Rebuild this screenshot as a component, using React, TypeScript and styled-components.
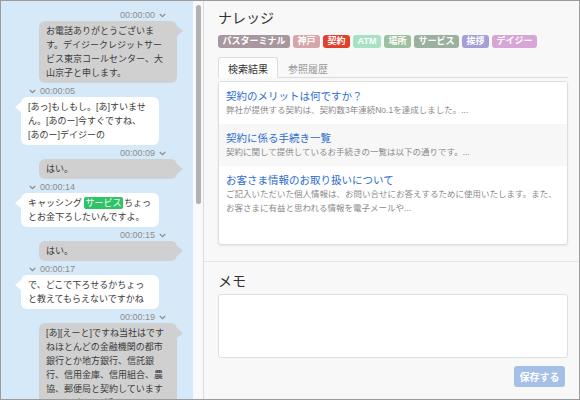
import React from 'react';
import styled, { createGlobalStyle } from 'styled-components';

const GlobalStyle = createGlobalStyle`
  html, body {
    margin: 0;
    padding: 0;
  }
  body {
    font-family: "Liberation Sans", "Noto Sans CJK JP", sans-serif;
  }
  * {
    box-sizing: border-box;
  }
`

type Side = 'agent' | 'caller';

const Frame = styled.div`
  width: 580px;
  height: 400px;
  border: 1px solid #9b9b9b;
  display: flex;
  overflow: hidden;
  background: #f8f8f8;
`

/* ---- chat column ---- */

const ChatPane = styled.div`
  width: 203px;
  flex-shrink: 0;
  display: flex;
  background: #d6e9f8;
  border-right: 1px solid #dcdcdc;
`

const ChatList = styled.div`
  flex: 1;
  display: flex;
  flex-direction: column;
  gap: 2px;
  padding: 8px 16px 0 20px;
  overflow: hidden;
`

const Message = styled.div<{ $side: Side }>`
  display: flex;
  flex-direction: column;
  align-items: ${ ({ $side }) => $side === 'agent' ? 'flex-end' : 'flex-start' };
`

const Stamp = styled.div<{ $side: Side }>`
  display: flex;
  align-items: center;
  gap: 4px;
  height: 12px;
  font-size: 9px;
  color: #8c8c8c;
  margin: ${ ({ $side }) => $side === 'agent' ? '0 11px 0 0' : '0 0 0 8px' };
`

const Bubble = styled.div<{ $side: Side }>`
  position: relative;
  width: 138px;
  padding: 3px 7px;
  border-radius: 6px;
  font-size: 9px;
  line-height: 14px;
  color: #3a3a3a;
  white-space: pre;
  background: ${ ({ $side }) => $side === 'agent' ? '#d0d0d0' : '#ffffff' };

  &::after {
    content: '';
    position: absolute;
    top: 5px;
    width: 0;
    height: 0;
    border-top: 5px solid transparent;
    border-bottom: 5px solid transparent;
    ${ ({ $side }) => $side === 'agent'
      ? 'right: -6px; border-left: 6px solid #d0d0d0;'
      : 'left: -6px; border-right: 6px solid #ffffff;' }
  }
`

const Keyword = styled.span`
  display: inline-block;
  background: #2fc266;
  color: #fff;
  padding: 0 1.5px;
  margin: 0 1px 0 2px;
  border-radius: 2px;
  line-height: 12px;
`

const Track = styled.div`
  width: 10px;
  background: #f9f9f9;
  padding: 4px 2px 0 3px;
`

const Thumb = styled.div`
  width: 5px;
  height: 199px;
  border-radius: 3px;
  background: #b1b1b1;
`

const Chevron = () => (
  <svg width="7" height="5" viewBox="0 0 7 5">
    <path d="M0.8 1 L3.5 3.7 L6.2 1" fill="none" stroke="#8c8c8c" strokeWidth="1.2" />
  </svg>
)

type Line = string | { kw: string };

const messages: { side: Side; time: string; lines: Line[][] }[] = [
  {
    side: 'agent',
    time: '00:00:00',
    lines: [['お電話ありがとうございま'], ['す。デイジークレジットサー'], ['ビス東京コールセンター、大'], ['山京子と申します。']],
  },
  {
    side: 'caller',
    time: '00:00:05',
    lines: [['[あっ]もしもし。[あ]すいませ'], ['ん。[あのー]今すぐですね、'], ['[あのー]デイジーの']],
  },
  { side: 'agent', time: '00:00:09', lines: [['はい。']] },
  {
    side: 'caller',
    time: '00:00:14',
    lines: [['キャッシング', { kw: 'サービス' }, 'ちょっ'], ['とお金下ろしたいんですよ。']],
  },
  { side: 'agent', time: '00:00:15', lines: [['はい。']] },
  {
    side: 'caller',
    time: '00:00:17',
    lines: [['で、どこで下ろせるかちょっ'], ['と教えてもらえないですかね']],
  },
  {
    side: 'agent',
    time: '00:00:19',
    lines: [
      ['[あ][えーと]ですね当社はです'],
      ['ねほとんどの金融機関の都市'],
      ['銀行とか地方銀行、信託銀'],
      ['行、信用金庫、信用組合、農'],
      ['協、郵便局と契約しています'],
      ['ので、[あの]ー近くのATMで'],
    ],
  },
]

/* ---- knowledge column ---- */

const SidePane = styled.div`
  flex: 1;
  display: flex;
  flex-direction: column;
  background: #f8f8f8;
`

const Knowledge = styled.section`
  padding: 8px 11px 16px 14px;
  border-bottom: 1px solid #e4e4e4;
`

const Heading = styled.h2`
  margin: 0;
  font-size: 14px;
  line-height: 18px;
  font-weight: 400;
  color: #333;
`

const TagRow = styled.div`
  display: flex;
  gap: 3px;
  margin-top: 8px;
`

const Tag = styled.span<{ $bg: string }>`
  height: 13px;
  line-height: 13px;
  padding: 0 4.5px;
  border-radius: 3px;
  font-size: 9px;
  font-weight: 700;
  color: #fff;
  background: ${ ({ $bg }) => $bg };
`

const Tabs = styled.div`
  display: flex;
  margin-top: 9px;
  height: 21px;
  border-bottom: 1px solid #dcdcdc;
`

const Tab = styled.div<{ $active?: boolean }>`
  width: 60px;
  height: 21px;
  display: flex;
  align-items: center;
  justify-content: center;
  font-size: 10px;
  color: ${ ({ $active }) => $active ? '#333' : '#999' };
  background: ${ ({ $active }) => $active ? '#fdfdfd' : 'transparent' };
  border: 1px solid ${ ({ $active }) => $active ? '#dcdcdc' : 'transparent' };
  border-bottom: none;
  border-radius: 3px 3px 0 0;
`

const Results = styled.div`
  margin-top: 3px;
  height: 164px;
  background: #fff;
  border: 1px solid #dedede;
  border-radius: 3px;
  box-shadow: 0 1px 2px rgba(0, 0, 0, 0.08);
  overflow: hidden;
`

const Result = styled.div<{ $shade?: boolean }>`
  padding: 7px 8px 7px 7px;
  background: ${ ({ $shade }) => $shade ? '#f7f7f7' : '#fff' };
`

const ResultTitle = styled.div`
  font-size: 10.5px;
  line-height: 14px;
  color: #2c6dcf;
`

const ResultText = styled.div`
  font-size: 8.5px;
  line-height: 14px;
  color: #8a8a8a;
  white-space: pre-line;
`

const Memo = styled.section`
  padding: 10px 11px 0 14px;
  display: flex;
  flex-direction: column;
`

const MemoBox = styled.textarea`
  margin-top: 4px;
  height: 64px;
  width: 100%;
  resize: none;
  background: #fff;
  border: 1px solid #dcdfe3;
  border-radius: 3px;
  font-family: inherit;
`

const ButtonRow = styled.div`
  display: flex;
  justify-content: flex-end;
  margin-top: 8px;
  padding-right: 3px;
`

const SaveButton = styled.button`
  width: 51px;
  height: 21px;
  border: none;
  border-radius: 3px;
  background: #a5c0e6;
  color: #fff;
  font-family: inherit;
  font-size: 10px;
  font-weight: 700;
  padding: 0;
`

const tags = [
  { label: 'パスターミナル', bg: '#a8979f' },
  { label: '神戸', bg: '#d7a6ab' },
  { label: '契約', bg: '#e1402c' },
  { label: 'ATM', bg: '#a6e3c3' },
  { label: '場所', bg: '#9dc19f' },
  { label: 'サービス', bg: '#9bb09f' },
  { label: '挨拶', bg: '#a59fd6' },
  { label: 'デイジー', bg: '#d7a6d6' },
]

const results = [
  { title: '契約のメリットは何ですか？', text: '弊社が提供する契約は、契約数3年連続No.1を達成しました。...' },
  { title: '契約に係る手続き一覧', text: '契約に関して提供しているお手続きの一覧は以下の通りです。...' },
  {
    title: 'お客さま情報のお取り扱いについて',
    text: 'ご記入いただいた個人情報は、お問い合せにお答えするために使用いたします。また、\nお客さまに有益と思われる情報を電子メールや...',
  },
]

export default function App () {
  return (
    <>
      <GlobalStyle />
      <Frame>
        <ChatPane>
          <ChatList>
            { messages.map((m, i) => (
              <Message key={ i } $side={ m.side }>
                <Stamp $side={ m.side }>
                  { m.side === 'agent' ? <>{ m.time }<Chevron /></> : <><Chevron />{ m.time }</> }
                </Stamp>
                <Bubble $side={ m.side }>
                  { m.lines.map((line, j) => (
                    <div key={ j }>
                      { line.map((part, k) => typeof part === 'string'
                        ? <React.Fragment key={ k }>{ part }</React.Fragment>
                        : <Keyword key={ k }>{ part.kw }</Keyword>) }
                    </div>
                  )) }
                </Bubble>
              </Message>
            )) }
          </ChatList>
          <Track>
            <Thumb />
          </Track>
        </ChatPane>

        <SidePane>
          <Knowledge>
            <Heading>ナレッジ</Heading>
            <TagRow>
              { tags.map(t => <Tag key={ t.label } $bg={ t.bg }>{ t.label }</Tag>) }
            </TagRow>
            <Tabs>
              <Tab $active>検索結果</Tab>
              <Tab>参照履歴</Tab>
            </Tabs>
            <Results>
              { results.map((r, i) => (
                <Result key={ r.title } $shade={ i === 1 }>
                  <ResultTitle>{ r.title }</ResultTitle>
                  <ResultText>{ r.text }</ResultText>
                </Result>
              )) }
            </Results>
          </Knowledge>
          <Memo>
            <Heading>メモ</Heading>
            <MemoBox />
            <ButtonRow>
              <SaveButton>保存する</SaveButton>
            </ButtonRow>
          </Memo>
        </SidePane>
      </Frame>
    </>
  )
}
